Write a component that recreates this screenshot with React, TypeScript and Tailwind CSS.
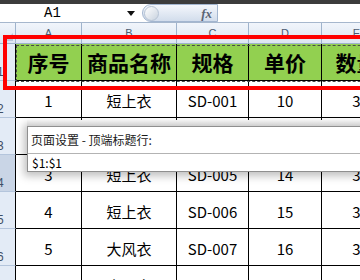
import React from 'react';

const colW = ['w-[66px]', 'w-[95px]', 'w-[72px]', 'w-[73px]', 'w-[70px]'];
const letters = ['A', 'B', 'C', 'D', 'E'];
const header = ['序号', '商品名称', '规格', '单价', '数量'];
const data = [
  ['1', '短上衣', 'SD-001', '10', '3'],
  ['', '', '', '', ''],
  ['3', '短上衣', 'SD-005', '14', '3'],
  ['4', '短上衣', 'SD-006', '15', '3'],
  ['5', '大风衣', 'SD-007', '16', '3'],
  ['6', '大风衣', 'SD-008', '17', '3'],
];

function RowHead({ n, dark }: { n: number; dark?: boolean }) {
  return (
    <div
      className={`w-[16px] shrink-0 h-full border-r border-black border-b border-b-[#b4c5dc] flex items-end overflow-hidden ${
        dark ? 'bg-[#c9d5e6]' : 'bg-[#e3ebf6]'
      }`}
    >
      <span className="-ml-[3px] mb-[1px] text-[12px] leading-[14px] text-[#3f4f66] font-['Liberation_Sans',sans-serif]">
        {n}
      </span>
    </div>
  );
}

export default function App() {
  return (
    <div className="relative w-[360px] h-[280px] overflow-hidden bg-white font-['Noto_Sans_CJK_SC',sans-serif]">
      <div className="h-[4px] bg-[#3c3c3c]" />
      {/* formula bar */}
      <div className="flex h-[19px] bg-white border-b border-[#a6b7cd]">
        <div className="w-[142px] shrink-0 flex items-center">
          <span className="ml-[44px] text-[14px] leading-none text-black font-['Liberation_Mono',monospace]">A1</span>
          <svg className="ml-auto mr-[7px]" width="8" height="5" viewBox="0 0 8 5">
            <path d="M0 0 H8 L4 5 Z" fill="#111" />
          </svg>
        </div>
        <div className="w-[76px] shrink-0 h-full flex items-center rounded-l-full border border-[#a3b6d0] bg-gradient-to-b from-[#f4f7fc] to-[#d2ddec]">
          <div className="ml-[1px] w-[15px] h-[15px] rounded-full border border-[#b6c3d4] bg-gradient-to-br from-[#ffffff] to-[#c9d3df]" />
          <span className="ml-auto mr-[5px] italic font-bold text-[13px] leading-none text-[#5a6474] font-['Liberation_Serif',serif]">
            fx
          </span>
        </div>
        <div className="flex-1 bg-white" />
      </div>
      {/* column header */}
      <div className="flex h-[21px] bg-gradient-to-b from-[#f1f5fb] to-[#dde6f2] border-b border-[#9fb3cc]">
        <div className="w-[16px] shrink-0 border-r border-[#9fb3cc] relative">
          <svg className="absolute right-[2px] bottom-[2px]" width="8" height="8" viewBox="0 0 8 8">
            <path d="M8 0 V8 H0 Z" fill="#b8c7db" />
          </svg>
        </div>
        {letters.map((l, i) => (
          <div
            key={l}
            className={`${colW[i]} shrink-0 border-r border-[#9fb3cc] flex items-center justify-center text-[11px] text-[#4a5a70] font-['Liberation_Sans',sans-serif]`}
          >
            {l}
          </div>
        ))}
      </div>
      {/* header row */}
      <div className="flex h-[37px]">
        <RowHead n={1} />
        {header.map((h, i) => (
          <div
            key={h}
            className={`${colW[i]} shrink-0 h-full bg-[#92d050] border-r border-b border-black flex items-center justify-center text-[21px] font-bold text-black leading-none whitespace-nowrap`}
          >
            {h}
          </div>
        ))}
      </div>
      {data.map((r, ri) => (
        <div key={ri} className="flex h-[37px]">
          <RowHead n={ri + 2} dark={ri === 2} />
          {r.map((c, i) => (
            <div
              key={i}
              className={`${colW[i]} shrink-0 h-full border-r border-b border-black flex items-center justify-center pt-[3px] text-[15px] text-black leading-none whitespace-nowrap`}
            >
              {c}
            </div>
          ))}
        </div>
      ))}

      {/* marching ants */}
      <div className="absolute left-[16px] top-[45px] w-[400px] h-[37px] border border-dashed border-[#4a4a4a]" />
      {/* red frame */}
      <div className="absolute left-[3px] top-[35px] w-[420px] h-[55px] border-4 border-[#ff0000]" />

      {/* dialog */}
      <div className="absolute left-[27px] top-[120px] w-[360px] shadow-[-3px_4px_8px_rgba(0,0,0,0.25)]">
        <div className="h-[6px] bg-gradient-to-b from-[#f3f3f3] to-[#cfcfcf]" />
        <div className="bg-white border-l border-t border-[#8f8f8f]">
          <div className="h-[26px] flex items-center pl-[3px] text-[12px] text-[#1a1a1a] leading-none">
            页面设置 - 顶端标题行:
          </div>
          <div className="h-[19px] border-t border-[#b3b3b3] border-b border-b-[#8f8f8f] flex items-center pl-[4px] text-[12px] text-black leading-none">
            $1:$1
          </div>
        </div>
      </div>
    </div>
  );
}
